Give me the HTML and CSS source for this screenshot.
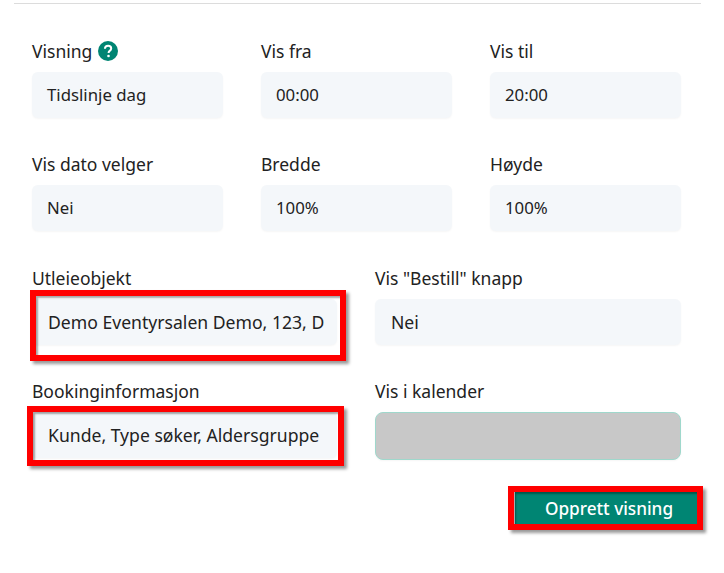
FILE: index.html
```html
<!DOCTYPE html>
<html lang="en">
<head>
    <meta charset="UTF-8" />
    <title>Opprett visning</title>
    <link rel="stylesheet" href="styles.css">
</head>
<body>
    <main class="panel">
        <!-- Top row -->
        <div class="row row-three">
            <div class="field">
                <label class="field-label">Visning
                    <svg class="help-icon" viewBox="0 0 20 20" width="20" height="20">
                        <circle cx="10" cy="10" r="10" fill="#008573" />
                        <path d="M6.900 7.700c.1-1.900 1.400-3 3.200-3 1.800 0 3.100 1.100 3.100 2.700 0 1.200-.7 1.900-1.500 2.500-.8.6-1.100 1-1.100 1.800v.3" fill="none" stroke="#fff" stroke-width="2" />
                        <circle cx="10.500" cy="15" r="1.300" fill="#fff" />
                    </svg>
                </label>
                <div class="input">Tidslinje dag</div>
            </div>
            <div class="field">
                <label class="field-label">Vis fra</label>
                <div class="input">00:00</div>
            </div>
            <div class="field">
                <label class="field-label">Vis til</label>
                <div class="input">20:00</div>
            </div>
        </div>

        <div class="row row-three">
            <div class="field">
                <label class="field-label">Vis dato velger</label>
                <div class="input">Nei</div>
            </div>
            <div class="field">
                <label class="field-label">Bredde</label>
                <div class="input">100%</div>
            </div>
            <div class="field">
                <label class="field-label">Høyde</label>
                <div class="input">100%</div>
            </div>
        </div>

        <div class="row row-two">
            <div class="field">
                <label class="field-label">Utleieobjekt</label>
                <div class="input">Demo Eventyrsalen Demo, 123, D</div>
                <span class="mark mark-object"></span>
            </div>
            <div class="field">
                <label class="field-label">Vis "Bestill" knapp</label>
                <div class="input">Nei</div>
            </div>
        </div>

        <div class="row row-two row-last">
            <div class="field">
                <label class="field-label">Bookinginformasjon</label>
                <div class="input">Kunde, Type søker, Aldersgruppe</div>
                <span class="mark mark-info"></span>
            </div>
            <div class="field">
                <label class="field-label">Vis i kalender</label>
                <div class="input input-disabled"></div>
            </div>
        </div>

        <!-- Footer -->
        <div class="actions">
            <button class="create-btn">Opprett visning</button>
            <span class="mark mark-btn"></span>
        </div>
    </main>
</body>
</html>
```
FILE: styles.css
```css
* {
    box-sizing: border-box;
    margin: 0;
    padding: 0;
    font-family: "Noto Sans", sans-serif;
}

body {
    background-color: #fff;
    color: #212529;
}

.panel {
    width: 687px;
    height: 570px;
    margin-left: 14px;
    margin-top: 3px;
    padding: 36px 19px 0 18px;
    position: relative;
    border-top: 1px solid #dcdcdc;
}

.row {
    display: grid;
    margin-bottom: 35.4px;
}

.row-last {
    margin-bottom: 32px;
}

.row-three {
    grid-template-columns: 191px 191px 191px;
    column-gap: 38px;
}

.row-two {
    grid-template-columns: 305px 306px;
    column-gap: 38px;
}

.field {
    position: relative;
}

.field-label {
    display: flex;
    align-items: center;
    gap: 6px;
    height: 22px;
    margin-bottom: 10px;
    font-size: 17.5px;
    line-height: 22px;
    color: #222;
}

.help-icon {
    display: block;
}

.input {
    height: 46px;
    padding: 0 15px;
    background: #f4f7fa;
    border-radius: 6px;
    box-shadow: 0 1px 2px rgba(0,0,0,0.04);
    font-size: 16.8px;
    line-height: 46px;
    color: #222;
    white-space: nowrap;
    overflow: hidden;
}

.row-two .input {
    padding: 0 16px;
    font-size: 17.6px;
}

.input-disabled {
    height: 48px;
    background: #c8c8c8;
    border: 1px solid #9fd8cc;
    border-radius: 8px;
}

.actions {
    position: relative;
    display: flex;
    justify-content: flex-end;
    margin-right: -15px;
}

.create-btn {
    width: 182px;
    height: 32px;
    padding-left: 6px;
    border: none;
    background: #008573;
    color: #fff;
    font-size: 17.2px;
    font-weight: 500;
}

/* Red annotation frames drawn over the form */
.mark {
    position: absolute;
    border: 6px solid #f00;
    box-shadow: 3px 3px 3px rgba(0,0,0,0.4), inset 2px 2px 2px rgba(0,0,0,0.35);
    pointer-events: none;
}

.mark-object {
    left: -2px;
    top: 23px;
    width: 316px;
    height: 71px;
}

.mark-info {
    left: -5px;
    top: 26px;
    width: 317px;
    height: 60px;
}

.mark-btn {
    right: -6px;
    top: -6px;
    width: 195px;
    height: 44px;
}
```
